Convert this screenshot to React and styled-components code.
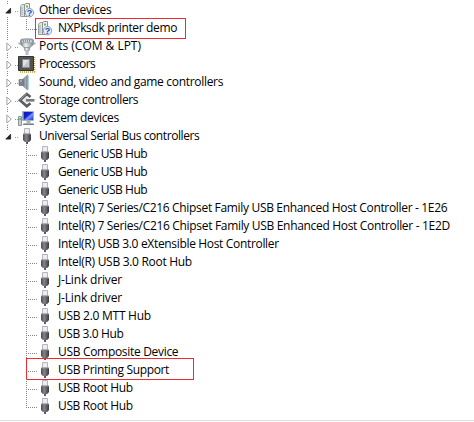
import React from "react";
import styled, { createGlobalStyle } from "styled-components";

const GlobalStyle = createGlobalStyle`
  * { box-sizing: border-box; }
  body { margin: 0; background: #fff; overflow: hidden; }
`;

const Panel = styled.main`
  width: 474px;
  height: 422px;
  background: #fff;
  padding-top: 1px;
  display: flex;
  flex-direction: column;
  font: 12px/18px "Open Sans", "Noto Sans", sans-serif;
  color: #000;
`;

const Tree = styled.ul`
  list-style: none;
  margin: 0;
  padding: 0;
  height: 419px;
`;

const Row = styled.li`
  position: relative;
  display: flex;
  align-items: center;
  height: 18px;
`;

const dots = "repeating-linear-gradient(to bottom, #858585 0 1px, transparent 1px 2px)";

const Gutter = styled.span`
  flex: none;
  width: 19px;
  height: 18px;
  padding: 4px 0 0 5px;
  background: ${(p) => (p.$line ? `${dots} 7px 0 / 1px ${p.$line} no-repeat` : "none")},
    ${(p) =>
      p.$dash
        ? "repeating-linear-gradient(to right, #999 0 1px, transparent 1px 2px) 15px 10px / 4px 1px no-repeat"
        : "linear-gradient(transparent, transparent)"};
`;

const Branch = styled.span`
  flex: none;
  width: 18px;
  height: 18px;
  background: ${dots} 7px 0 / 1px ${(p) => (p.$last ? "11px" : "18px")} no-repeat,
    repeating-linear-gradient(to right, #858585 0 1px, transparent 1px 2px) 9px 10px / 9px 1px no-repeat;
`;

const Icon = styled.svg`
  flex: none;
  width: 17px;
  height: 18px;
  display: block;
  overflow: visible;
`;

const Arrow = styled.svg`
  width: 7px;
  height: 12px;
  display: block;
  background: #fff;
`;

const Label = styled.span`
  margin-left: ${(p) => (p.$child ? 4 : 3)}px;
  white-space: pre;
  letter-spacing: ${(p) => p.$track}px;
`;

const Highlight = styled.span`
  position: absolute;
  left: ${(p) => p.$left}px;
  top: ${(p) => p.$top}px;
  width: ${(p) => p.$width}px;
  height: ${(p) => p.$height}px;
  border: 1px solid #ee2b2f;
`;

const Divider = styled.div`
  height: 1px;
  background: #dcdcdc;
`;

const Gradients = styled.svg`
  position: absolute;
  width: 0;
  height: 0;
`;

function SharedGradients() {
  return (
    <Gradients aria-hidden="true">
      <defs>
        <linearGradient id="dark" x1="0" x2="1">
          <stop offset="0" stopColor="#4b4b4f" />
          <stop offset=".4" stopColor="#85858a" />
          <stop offset="1" stopColor="#3a3a3e" />
        </linearGradient>
        <linearGradient id="metal" x1="0" x2="1">
          <stop offset="0" stopColor="#777c80" />
          <stop offset=".4" stopColor="#eef1f3" />
          <stop offset="1" stopColor="#80868a" />
        </linearGradient>
        <linearGradient id="cone" x1="0" x2="1">
          <stop offset="0" stopColor="#5f686f" />
          <stop offset=".6" stopColor="#a4b0b8" />
          <stop offset="1" stopColor="#6d7880" />
        </linearGradient>
        <linearGradient id="screen" x1="0" x2="1" y2="1">
          <stop offset="0" stopColor="#0718a8" />
          <stop offset=".45" stopColor="#1426d8" />
          <stop offset=".6" stopColor="#8296fa" />
          <stop offset="1" stopColor="#1832d8" />
        </linearGradient>
      </defs>
    </Gradients>
  );
}

const drawings = {
  usb: (
    <>
      <path d="M5.5 1.5h5v5.5h-5z" fill="#eceef3" stroke="#b3b5be" />
      <path d="M4 7h8v6l-1.8 2H5.8L4 13z" fill="url(#dark)" />
      <path d="M4 7h8" stroke="#8c8c92" />
      <path d="M7 15h2v2H7z" fill="#5c5c61" />
    </>
  ),
  unknown: (
    <>
      <path d="M1.5 5.2 3 3.5h3v12H1.5z" fill="#dfe2e3" stroke="#9a9fa2" />
      <path d="M5.5 3.5 7 2.5h3.5v13h-5z" fill="#f1f3f3" stroke="#8b9194" />
      <path d="M7 4.5h2v2H7z" fill="#5dbf45" />
      <path d="M3 6v8M8 9v5" stroke="#a9afb2" />
      <circle cx="10.5" cy="11.7" r="4.2" fill="#e3edfb" stroke="#8b9eb9" />
      <text x="10.5" y="14.9" textAnchor="middle" fontSize="9" fontWeight="700" fontFamily="Liberation Sans, sans-serif" fill="#1c50b8">?</text>
    </>
  ),
  port: (
    <>
      <path d="M1.5 3C1.5 1.3 14.5 1.3 14.5 3v4.5L11 10.5H5L1.5 7.5z" fill="url(#metal)" stroke="#8f989d" strokeWidth=".8" />
      <path d="M2.5 3.3c2-1 9-1 11 0v2.4h-11z" fill="#d0d9de" stroke="#7d878d" strokeWidth=".6" />
      <path d="M4 4h8" stroke="#556068" strokeDasharray="1 1" />
      <path d="M5 10.5h6l-1 3.5H6z" fill="url(#metal)" stroke="#899095" strokeWidth=".6" />
      <path d="M6.5 13.5h3V18h-3z" fill="#b7bec2" />
      <path d="M-.5 5.5h2v2h-2zM14.5 5.5h2v2h-2z" fill="#a6b0b5" />
    </>
  ),
  chip: (
    <>
      <path d="M1 17h15M15.5 2v15" stroke="#d39a2d" strokeWidth="1.4" strokeDasharray="1 1" />
      <path d="M-.5 1.5h15v14h-15z" fill="#505254" stroke="#333537" />
      <path d="M3.5 4.5h7v8h-7z" fill="#c2c5c7" stroke="#898c8e" />
      <path d="M4 12V5h6z" fill="#dfe1e2" />
    </>
  ),
  sound: (
    <>
      <path d="M0 6.5h4v6H0z" fill="#7d878e" stroke="#626c73" strokeWidth=".6" />
      <path d="M3.5 6.5 8.5 2v15l-5-4.5z" fill="url(#cone)" stroke="#7d878d" strokeWidth=".6" />
      <path d="M9.3 2.5v14" stroke="#a5cde2" strokeWidth="1.2" />
      <path d="M1 8h2" stroke="#c3cbd0" />
    </>
  ),
  storage: (
    <>
      <path d="M7.5 5.5 4 9.3l3.5 3.5L11 9.3z" fill="#e4e4e4" />
      <path d="M11.5 6 7.8 3 1 9.3l6.8 6 3.7-3" fill="none" stroke="#5b5e60" strokeWidth="2.7" />
      <path d="M7 9.3h8.5" stroke="#77797b" strokeWidth="2.6" />
      <path d="M1 8.9 7.8 2.7" stroke="#a6a8aa" strokeWidth=".8" />
    </>
  ),
  computer: (
    <>
      <path d="M-.5 7.5h3v9h-3z" fill="#c8d0d5" stroke="#89969e" />
      <path d="M.4 9h1.3v2H.4z" fill="#4bb34e" />
      <path d="M3.5 2.5h11v9h-11z" fill="#d5dce1" stroke="#a8b1b9" />
      <path d="M4.5 3h9.5v8H4.5z" fill="url(#screen)" />
      <path d="M7.5 12h4v2h3v2h-10v-2h3z" fill="#a9b3bc" />
      <path d="M4 15.5h11" stroke="#737e86" />
    </>
  ),
};

function Expander({ open }) {
  return (
    <Arrow viewBox="0 0 7 12">
      {open ? (
        <path d="M5.6 3.2v4.9H.8z" fill="#222" stroke="#222" strokeWidth=".8" />
      ) : (
        <path d="M1.9 2v8L6.2 6z" fill="#fff" stroke="#a0a0a0" />
      )}
    </Arrow>
  );
}

const devices = [
  { text: "Other devices", icon: "unknown", open: true, track: -0.36 },
  { text: "NXPksdk printer demo", icon: "unknown", child: true, outer: true, last: true, track: -0.35, box: [35, -1, 151, 21] },
  { text: "Ports (COM & LPT)", icon: "port", track: -0.02 },
  { text: "Processors", icon: "chip", track: -0.48 },
  { text: "Sound, video and game controllers", icon: "sound", track: -0.31 },
  { text: "Storage controllers", icon: "storage", track: -0.37 },
  { text: "System devices", icon: "computer", track: -0.36 },
  { text: "Universal Serial Bus controllers", icon: "usb", open: true, end: true, track: -0.41 },
  { text: "Generic USB Hub", child: true, track: -0.46 },
  { text: "Generic USB Hub", child: true, track: -0.46 },
  { text: "Generic USB Hub", child: true, track: -0.46 },
  { text: "Intel(R) 7 Series/C216 Chipset Family USB Enhanced Host Controller - 1E26", child: true, track: -0.33 },
  { text: "Intel(R) 7 Series/C216 Chipset Family USB Enhanced Host Controller - 1E2D", child: true, track: -0.32 },
  { text: "Intel(R) USB 3.0 eXtensible Host Controller", child: true, track: -0.33 },
  { text: "Intel(R) USB 3.0 Root Hub", child: true, track: -0.3 },
  { text: "J-Link driver", child: true, track: -0.16 },
  { text: "J-Link driver", child: true, track: -0.16 },
  { text: "USB 2.0 MTT Hub", child: true, track: -0.27 },
  { text: "USB 3.0 Hub", child: true, track: -0.4 },
  { text: "USB Composite Device", child: true, track: -0.31 },
  { text: "USB Printing Support", child: true, track: -0.35, box: [26, -3, 168, 22] },
  { text: "USB Root Hub", child: true, track: -0.36 },
  { text: "USB Root Hub", child: true, last: true, track: -0.36 },
];

function DeviceRow({ device }) {
  const { text, icon = "usb", child, outer, open, end, last, track, box } = device;
  const line = end ? "9px" : (outer || !child) && "18px";
  return (
    <Row>
      <Gutter $line={line} $dash={!child}>
        {!child && <Expander open={open} />}
      </Gutter>
      {child && <Branch $last={last} />}
      <Icon viewBox="0 0 17 18">{drawings[icon]}</Icon>
      <Label $child={child} $track={track}>{text}</Label>
      {box && <Highlight $left={box[0]} $top={box[1]} $width={box[2]} $height={box[3]} />}
    </Row>
  );
}

export default function App() {
  return (
    <>
      <GlobalStyle />
      <SharedGradients />
      <Panel>
        <Tree>
          {devices.map((device, index) => (
            <DeviceRow key={index} device={device} />
          ))}
        </Tree>
        <Divider />
      </Panel>
    </>
  );
}
